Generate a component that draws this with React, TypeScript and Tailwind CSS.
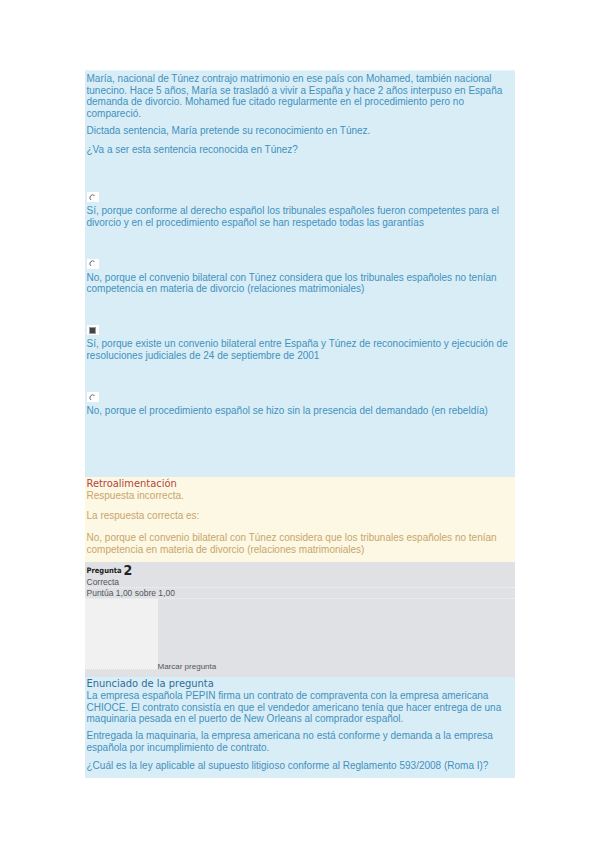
const sans = { fontFamily: '"Liberation Sans", Arial, sans-serif' }
const narrow = { fontFamily: '"DejaVu Sans Condensed", "Liberation Sans Narrow", sans-serif' }

function Radio({ checked = false }: { checked?: boolean }) {
  return (
    <div className="w-[12px] h-[10px] bg-white flex items-center justify-center">
      {checked ? (
        <svg width="7" height="7" viewBox="0 0 7 7">
          <rect x="1" y="1" width="5" height="5" fill="#444" />
          <rect x="0.5" y="0.5" width="6" height="6" fill="none" stroke="#999" strokeWidth="1" />
        </svg>
      ) : (
        <svg width="7" height="7" viewBox="0 0 7 7">
          <path d="M5.5 1.5 A2.6 2.6 0 1 0 2 6" fill="none" stroke="#666" strokeWidth="1" />
        </svg>
      )}
    </div>
  )
}

function Option({ text, checked, mt }: { text: string; checked?: boolean; mt: string }) {
  return (
    <div className={mt}>
      <Radio checked={checked} />
      <p className="mt-[3px]">{text}</p>
    </div>
  )
}

export default function App() {
  return (
    <div className="min-h-[848px] bg-white pt-[70px]" style={sans}>
      <div className="w-[430px] mx-auto text-[10px] leading-[11.7px]">
        <div className="bg-[#d9edf7] text-[#4291bd] px-[2px] pt-[2px] h-[407px] border-t border-[#e6f3fa]">
          <p>
            María, nacional de Túnez contrajo matrimonio en ese país con Mohamed, también nacional
            tunecino. Hace 5 años, María se trasladó a vivir a España y hace 2 años interpuso en España
            demanda de divorcio. Mohamed fue citado regularmente en el procedimiento pero no compareció.
          </p>
          <p className="mt-[5px]">Dictada sentencia, María pretende su reconocimiento en Túnez.</p>
          <p className="mt-[7px]">¿Va a ser esta sentencia reconocida en Túnez?</p>
          <Option
            mt="mt-[37px]"
            text="Sí, porque conforme al derecho español los tribunales españoles fueron competentes para el divorcio y en el procedimiento español se han respetado todas las garantías"
          />
          <Option
            mt="mt-[30px]"
            text="No, porque el convenio bilateral con Túnez considera que los tribunales españoles no tenían competencia en materia de divorcio (relaciones matrimoniales)"
          />
          <Option
            mt="mt-[30px]"
            checked
            text="Sí, porque existe un convenio bilateral entre España y Túnez de reconocimiento y ejecución de resoluciones judiciales de 24 de septiembre de 2001"
          />
          <Option
            mt="mt-[31px]"
            text="No, porque el procedimiento español se hizo sin la presencia del demandado (en rebeldía)"
          />
        </div>

        <div className="bg-[#fcf8e3] text-[#c9a56e] px-[2px] pt-[1px] h-[85px]">
          <p className="text-[#b5453b] text-[11px] leading-[12px]" style={narrow}>
            Retroalimentación
          </p>
          <p>Respuesta incorrecta.</p>
          <p className="mt-[8px]">La respuesta correcta es:</p>
          <p className="mt-[11px]">
            No, porque el convenio bilateral con Túnez considera que los tribunales españoles no tenían
            competencia en materia de divorcio (relaciones matrimoniales)
          </p>
        </div>

        <div className="bg-[#dfe1e5] text-[#555] h-[115px] pt-[2px] flex flex-col">
          <div className="px-[2px] flex items-end gap-[2px] leading-[13px]">
            <span className="text-[7.5px] font-bold text-[#222]" style={narrow}>
              Pregunta
            </span>
            <span className="text-[14px] font-bold text-[#222]" style={narrow}>
              2
            </span>
          </div>
          <div className="text-[8.5px] leading-[10px]">
            <p className="px-[2px] border-b border-dotted border-[#f2f3f5]">Correcta</p>
            <p className="px-[2px] border-b border-dotted border-[#f2f3f5]">Puntúa 1,00 sobre 1,00</p>
          </div>
          <div className="flex items-end">
            <div className="w-[73px] h-[71px] bg-[#f1f1f1] border-b border-dotted border-[#dcdcdc]" />
            <span className="text-[8px] leading-[9px] mb-[-1px]">Marcar pregunta</span>
          </div>
        </div>

        <div className="bg-[#d9edf7] text-[#4291bd] px-[2px] pt-[1px] h-[101px]">
          <p className="text-[#2e6e98] text-[11px] leading-[12px]" style={narrow}>
            Enunciado de la pregunta
          </p>
          <p>
            La empresa española PEPIN firma un contrato de compraventa con la empresa americana CHIOCE.
            El contrato consistía en que el vendedor americano tenía que hacer entrega de una maquinaria
            pesada en el puerto de New Orleans al comprador español.
          </p>
          <p className="mt-[5px]">
            Entregada la maquinaria, la empresa americana no está conforme y demanda a la empresa
            española por incumplimiento de contrato.
          </p>
          <p className="mt-[6px]">
            ¿Cuál es la ley aplicable al supuesto litigioso conforme al Reglamento 593/2008 (Roma I)?
          </p>
        </div>
      </div>
    </div>
  )
}
